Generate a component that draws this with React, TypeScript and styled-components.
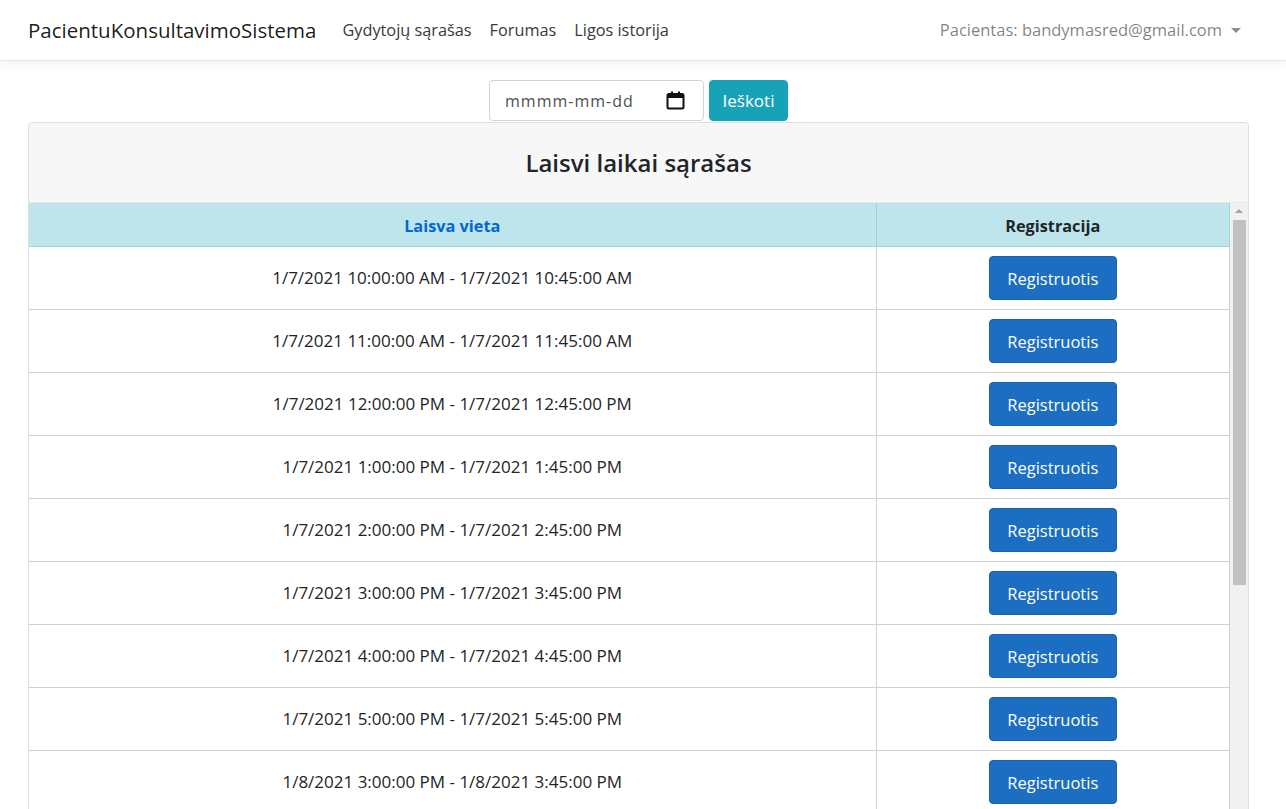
import React from "react";
import styled, { createGlobalStyle } from "styled-components";

const GlobalStyle = createGlobalStyle`
  html, body { margin: 0; padding: 0; overflow: hidden; background: #fff; }
  body {
    font-family: "Open Sans", "Noto Sans", "Liberation Sans", sans-serif;
    font-size: 16px;
    line-height: 1.5;
    color: #212529;
  }
  * { box-sizing: border-box; }
`;

const Navbar = styled.header`
  height: 61px;
  background: #fff;
  border-bottom: 1px solid #e5e5e5;
  box-shadow: 0 4px 12px rgba(0, 0, 0, 0.05);
  display: flex;
  align-items: center;
  padding: 0 37px 0 28px;
`;

const Brand = styled.a`
  font-size: 20.5px;
  color: rgba(0, 0, 0, 0.9);
  text-decoration: none;
  margin-right: 17px;
`;

const NavList = styled.nav`
  display: flex;
  flex: 1;
`;

const NavLink = styled.a`
  padding: 8px 9px;
  color: #343a40;
  text-decoration: none;
  font-size: 16.3px;
`;

const UserToggle = styled.a`
  display: flex;
  align-items: center;
  padding: 8px;
  color: rgba(0, 0, 0, 0.5);
  font-size: 16.5px;
  text-decoration: none;
  &::after {
    content: "";
    display: inline-block;
    margin-left: 9px;
    border-top: 5px solid rgba(0, 0, 0, 0.45);
    border-left: 5px solid transparent;
    border-right: 5px solid transparent;
  }
`;

const Main = styled.main`
  padding: 19px 37px 0 28px;
`;

const SearchRow = styled.form`
  display: flex;
  justify-content: center;
  gap: 5px;
`;

const DateField = styled.div`
  width: 215px;
  height: 41px;
  border: 1px solid #ced4da;
  border-radius: 4px;
  display: flex;
  align-items: center;
  justify-content: space-between;
  padding: 0 18px 0 15px;
  color: #495057;
  font-size: 16px;
  letter-spacing: 1px;
`;

const SearchButton = styled.button`
  width: 79px;
  height: 41px;
  border: 1px solid #17a2b8;
  background: #17a2b8;
  color: #fff;
  border-radius: 4px;
  font-family: inherit;
  font-size: 17px;
  padding: 0;
`;

const Card = styled.section`
  margin-top: 1px;
  border: 1px solid rgba(0, 0, 0, 0.125);
  border-radius: 4px;
  overflow: hidden;
`;

const CardHeader = styled.div`
  height: 80px;
  background: #f7f7f7;
  border-bottom: 1px solid rgba(0, 0, 0, 0.06);
  display: flex;
  align-items: center;
  justify-content: center;
`;

const Title = styled.h4`
  margin: 0;
  font-size: 24px;
  font-weight: 600;
  color: #212529;
`;

const ScrollArea = styled.div`
  display: flex;
  height: 640px;
`;

const Viewport = styled.div`
  flex: 1;
  overflow: hidden;
`;

const ScrollTrack = styled.div`
  width: 18px;
  flex: none;
  background: #f1f1f1;
  padding: 17px 2px 0 3px;
  position: relative;
  &::before {
    content: "";
    position: absolute;
    top: 6px;
    left: 5px;
    border-bottom: 4px solid #a3a3a3;
    border-left: 4px solid transparent;
    border-right: 4px solid transparent;
  }
`;

const ScrollThumb = styled.div`
  height: 365px;
  background: #c1c1c1;
`;

const Table = styled.table`
  width: 100%;
  border-collapse: collapse;
`;

const HeadCell = styled.th<{ $link?: boolean; $w?: string }>`
  height: 43px;
  padding: 3px 12px 0;
  background: #bee5eb;
  border: 1px solid #9fd2da;
  border-top: none;
  font-weight: 700;
  font-size: 16.3px;
  text-align: center;
  width: ${(p) => p.$w || "auto"};
  color: ${(p) => (p.$link ? "#0366d6" : "#212529")};
  &:first-child { border-left: none; }
`;

const Cell = styled.td`
  height: 63px;
  padding: 9px 12px 8px;
  border: 1px solid #d0d0d0;
  text-align: center;
  vertical-align: middle;
  font-size: 17px;
  &:first-child { border-left: none; }
`;

const RegisterButton = styled.button`
  width: 128px;
  height: 44px;
  background: #1b6ec2;
  border: 1px solid #1861ac;
  border-radius: 4px;
  color: #fff;
  font-family: inherit;
  font-size: 16.5px;
  padding: 0;
`;

const slots = [
  "1/7/2021 10:00:00 AM - 1/7/2021 10:45:00 AM",
  "1/7/2021 11:00:00 AM - 1/7/2021 11:45:00 AM",
  "1/7/2021 12:00:00 PM - 1/7/2021 12:45:00 PM",
  "1/7/2021 1:00:00 PM - 1/7/2021 1:45:00 PM",
  "1/7/2021 2:00:00 PM - 1/7/2021 2:45:00 PM",
  "1/7/2021 3:00:00 PM - 1/7/2021 3:45:00 PM",
  "1/7/2021 4:00:00 PM - 1/7/2021 4:45:00 PM",
  "1/7/2021 5:00:00 PM - 1/7/2021 5:45:00 PM",
  "1/8/2021 3:00:00 PM - 1/8/2021 3:45:00 PM",
];

const CalendarIcon = () => (
  <svg width="19" height="19" viewBox="0 0 19 19" aria-hidden="true">
    <rect x="1.5" y="3" width="16" height="14.5" rx="1.5" fill="none" stroke="#111" strokeWidth="2" />
    <rect x="1.5" y="3" width="16" height="4" fill="#111" />
    <rect x="5" y="0.5" width="2" height="4" fill="#111" />
    <rect x="12" y="0.5" width="2" height="4" fill="#111" />
  </svg>
);

export default function App() {
  return (
    <>
      <GlobalStyle />
      <Navbar>
        <Brand href="#">PacientuKonsultavimoSistema</Brand>
        <NavList>
          <NavLink href="#">Gydytojų sąrašas</NavLink>
          <NavLink href="#">Forumas</NavLink>
          <NavLink href="#">Ligos istorija</NavLink>
        </NavList>
        <UserToggle href="#">Pacientas: bandymasred@gmail.com</UserToggle>
      </Navbar>
      <Main>
        <SearchRow onSubmit={(e) => e.preventDefault()}>
          <DateField>
            <span>mmmm-mm-dd</span>
            <CalendarIcon />
          </DateField>
          <SearchButton type="submit">Ieškoti</SearchButton>
        </SearchRow>
        <Card>
          <CardHeader>
            <Title>Laisvi laikai sąrašas</Title>
          </CardHeader>
          <ScrollArea>
            <Viewport>
              <Table>
                <thead>
                  <tr>
                    <HeadCell $link $w="847px">Laisva vieta</HeadCell>
                    <HeadCell>Registracija</HeadCell>
                  </tr>
                </thead>
                <tbody>
                  {slots.map((s) => (
                    <tr key={s}>
                      <Cell>{s}</Cell>
                      <Cell>
                        <RegisterButton type="button">Registruotis</RegisterButton>
                      </Cell>
                    </tr>
                  ))}
                </tbody>
              </Table>
            </Viewport>
            <ScrollTrack>
              <ScrollThumb />
            </ScrollTrack>
          </ScrollArea>
        </Card>
      </Main>
    </>
  );
}
